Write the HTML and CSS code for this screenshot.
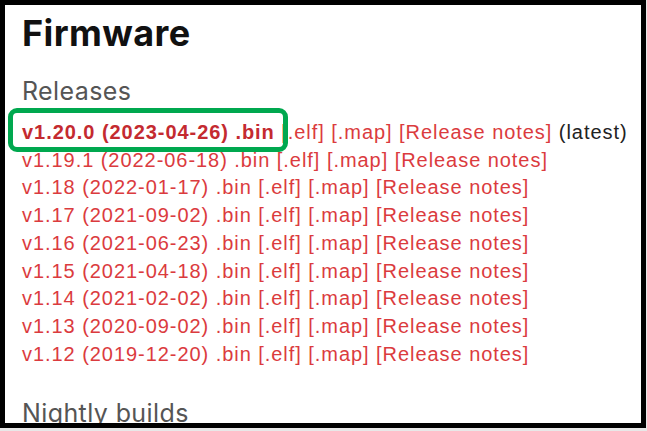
FILE: index.html
```html
<!DOCTYPE html>
<html>
<head>
<meta charset="utf-8">
<link rel="stylesheet" href="styles.css">
</head>
<body>
<div class="frame">
  <div class="content">
    <h1 class="title">Firmware</h1>
    <h2 class="section">Releases</h2>
    <ul class="releases">
      <li class="latest"><span class="hl"><a class="b">v1.20.0 (2023-04-26) .bin</a></span> <a>[.elf]</a> <a>[.map]</a> <a>[Release notes]</a> <span class="note">(latest)</span></li>
      <li><a>v1.19.1 (2022-06-18) .bin</a> <a>[.elf]</a> <a>[.map]</a> <a>[Release notes]</a></li>
      <li><a>v1.18 (2022-01-17) .bin</a> <a>[.elf]</a> <a>[.map]</a> <a>[Release notes]</a></li>
      <li><a>v1.17 (2021-09-02) .bin</a> <a>[.elf]</a> <a>[.map]</a> <a>[Release notes]</a></li>
      <li><a>v1.16 (2021-06-23) .bin</a> <a>[.elf]</a> <a>[.map]</a> <a>[Release notes]</a></li>
      <li><a>v1.15 (2021-04-18) .bin</a> <a>[.elf]</a> <a>[.map]</a> <a>[Release notes]</a></li>
      <li><a>v1.14 (2021-02-02) .bin</a> <a>[.elf]</a> <a>[.map]</a> <a>[Release notes]</a></li>
      <li><a>v1.13 (2020-09-02) .bin</a> <a>[.elf]</a> <a>[.map]</a> <a>[Release notes]</a></li>
      <li><a>v1.12 (2019-12-20) .bin</a> <a>[.elf]</a> <a>[.map]</a> <a>[Release notes]</a></li>
    </ul>
    <h2 class="section nightly">Nightly builds</h2>
  </div>
</div>
</body>
</html>
```
FILE: styles.css
```css
html, body {
  margin: 0;
  padding: 0;
  background: #e8e8e8;
}
.frame {
  box-sizing: border-box;
  width: 646px;
  height: 428px;
  border: 5px solid #000;
  background: #fff;
  overflow: hidden;
}
.content {
  padding: 6px 0 0 17px;
}
.title {
  margin: 0;
  font-family: "Inter", "Open Sans", sans-serif;
  font-weight: 700;
  font-size: 36px;
  line-height: 44px;
  color: #111;
  letter-spacing: 0.4px;
}
.section {
  margin: 21px 0 0 0;
  font-family: "Inter", "Open Sans", sans-serif;
  font-weight: 400;
  font-size: 25px;
  line-height: 30px;
  color: #555;
  letter-spacing: 0.4px;
}
.releases {
  list-style: none;
  margin: 13px 0 0 0;
  padding: 0;
  font-family: "Liberation Sans", Arial, sans-serif;
  font-size: 20px;
  letter-spacing: 0.95px;
  line-height: 27.7px;
  color: #d83a3a;
}
.releases a {
  color: #db3b3e;
}
.releases a.b {
  color: #c42a30;
  font-weight: 700;
}
.hl {
  position: relative;
}
.hl::before {
  content: "";
  position: absolute;
  left: -14px;
  right: -13px;
  top: -13px;
  bottom: -9px;
  border: 5px solid #00a84f;
  border-radius: 9px;
}
.note {
  color: #222;
}
.nightly {
  margin-top: 30px;
}
```
